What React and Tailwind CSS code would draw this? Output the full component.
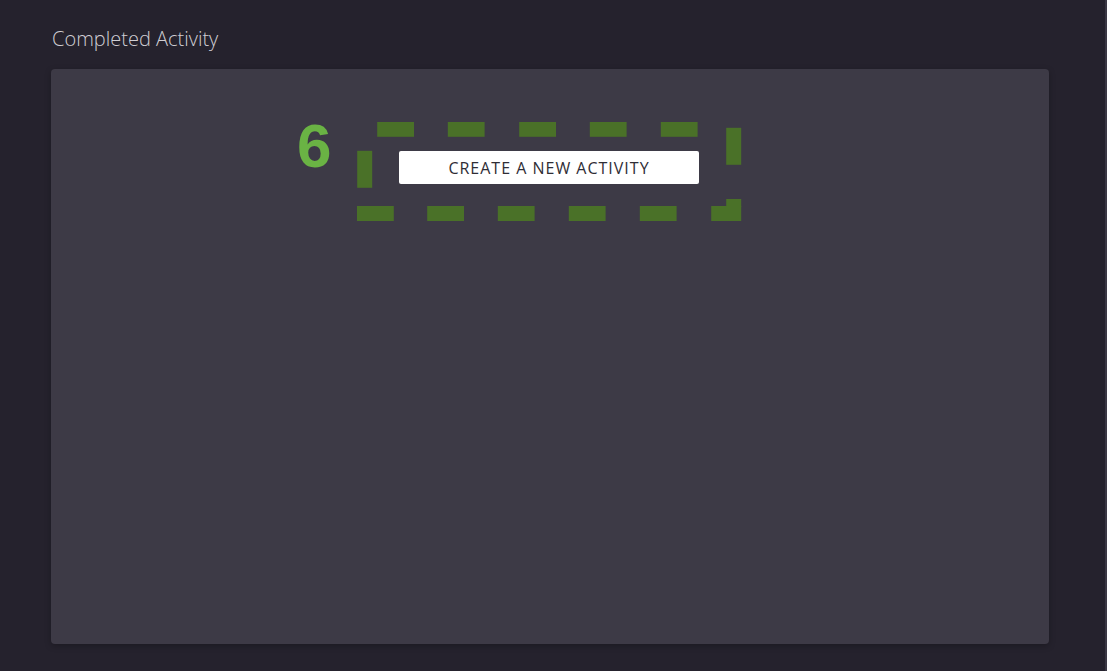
import React from "react";

function DashedFrame() {
  const c = "#4a7128";
  const top = [20.2, 90.8, 162.2, 232.8, 303.8];
  const bottom = [0, 70.2, 140.8, 211.8, 282.8];
  return (
    <svg className="absolute inset-0" width="385" height="99" viewBox="0 0 385 99">
      {top.map((x) => (
        <rect key={"t" + x} x={x} y="0" width="36.8" height="14.8" fill={c} />
      ))}
      {bottom.map((x) => (
        <rect key={"b" + x} x={x} y="84" width="36.8" height="15" fill={c} />
      ))}
      <rect x="0.2" y="28.8" width="15" height="37" fill={c} />
      <rect x="369.2" y="5.8" width="15" height="37" fill={c} />
      <rect x="354.2" y="84" width="30" height="15" fill={c} />
      <rect x="369.2" y="77" width="15" height="8" fill={c} />
    </svg>
  );
}

export default function App() {
  return (
    <div className="flex h-[671px] w-[1107px] bg-[#25222d]">
      <div className="flex-1 flex flex-col pl-[51px] pr-[56px]">
        <div
          className="pt-[25px] pb-[16px] pl-[1px] text-[20px] leading-[28px] font-light text-[#d0ced4]"
          style={{ fontFamily: '"Open Sans", sans-serif' }}
        >
          Completed Activity
        </div>
        <div className="h-[575px] rounded-[4px] bg-[#3d3a46] shadow-[0_2px_6px_rgba(0,0,0,0.25)] pt-[52.5px] pr-[2px]">
          <div className="relative mx-auto w-[385px] h-[99px] flex justify-center pt-[29.5px]">
            <div
              className="absolute right-full mr-[25px] top-[-12px] text-[62px] leading-[72px] font-bold text-[#6ab344]"
              style={{ fontFamily: '"Liberation Sans", Arial, sans-serif' }}
            >
              6
            </div>
            <DashedFrame />
            <button
              className="relative w-[300px] h-[33px] rounded-[2px] bg-white text-[16px] tracking-[1px] text-[#2f2d35] uppercase"
              style={{ fontFamily: '"Open Sans", sans-serif' }}
            >
              CREATE A NEW ACTIVITY
            </button>
          </div>
        </div>
      </div>
      <div className="w-[2px] bg-[#3a3744]" />
    </div>
  );
}
